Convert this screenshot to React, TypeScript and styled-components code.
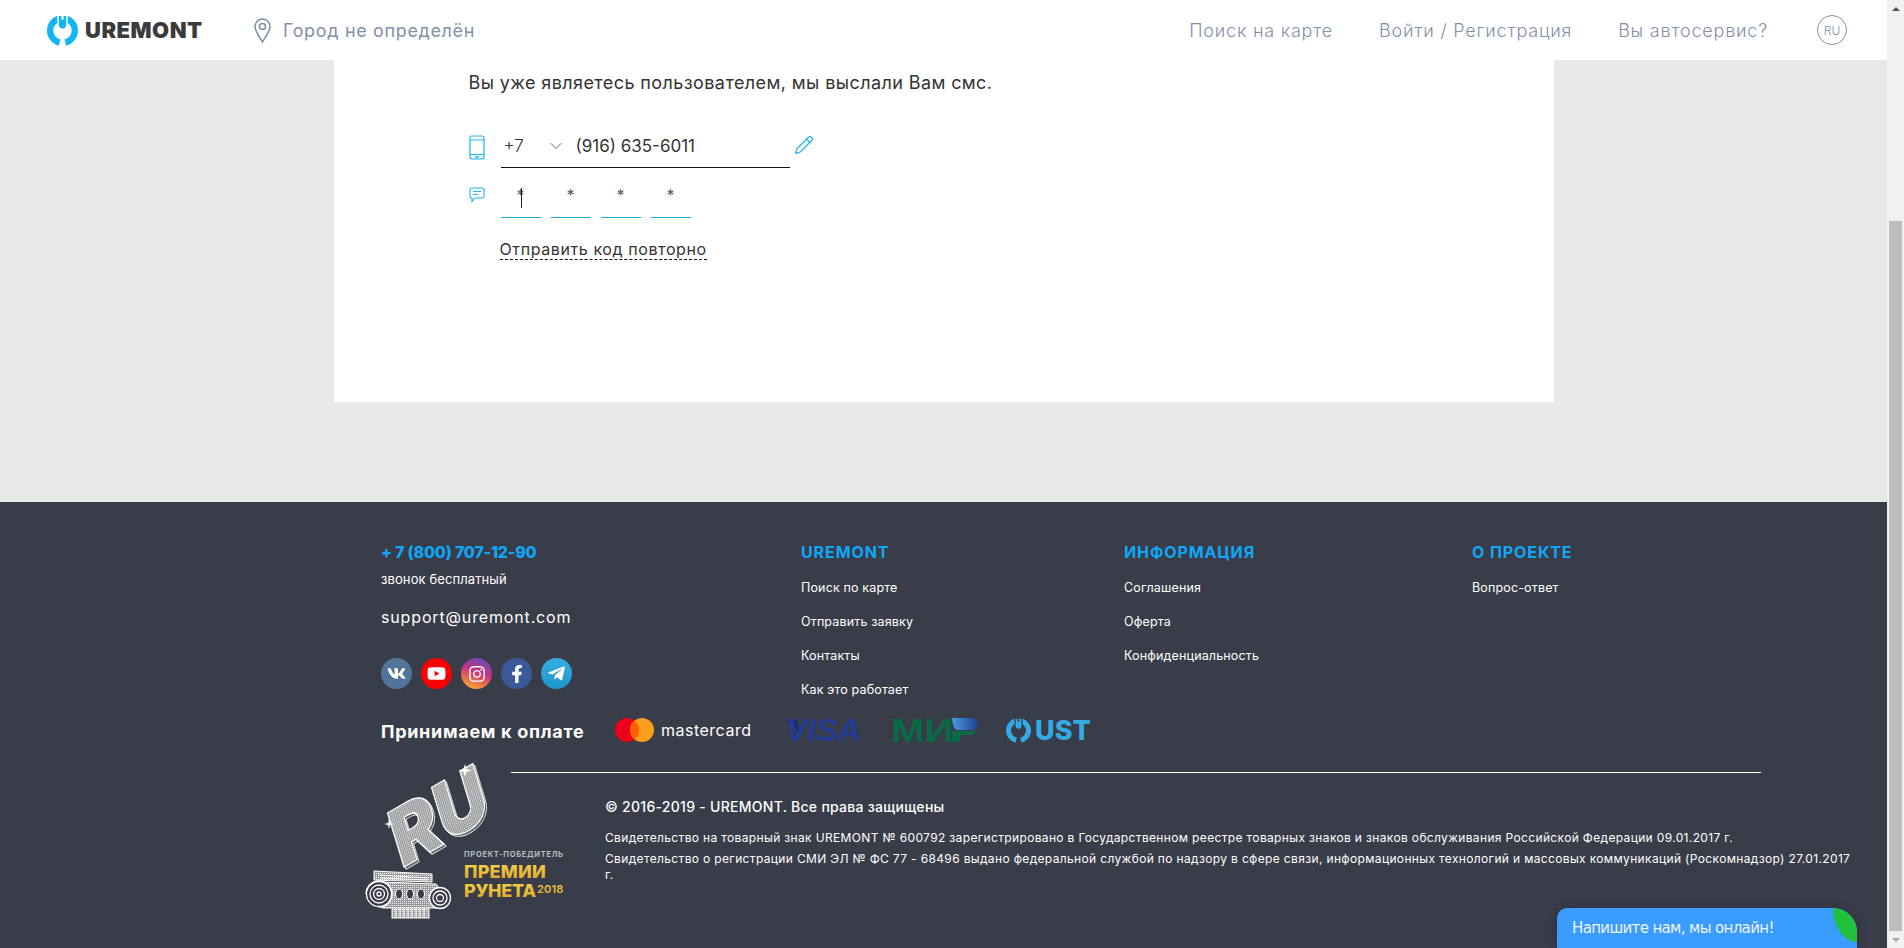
import React from "react";
import styled, { createGlobalStyle } from "styled-components";
import { FaVk, FaYoutube, FaInstagram, FaFacebookF, FaTelegramPlane } from "react-icons/fa";
import { ChevronDown, Pencil } from "lucide-react";

const Global = createGlobalStyle`
  html, body { margin: 0; padding: 0; height: 100%; overflow: hidden; }
  body { font-family: Inter, "Open Sans", sans-serif; color: #333; }
  * { box-sizing: border-box; }
`;

const Page = styled.div`
  display: flex;
  height: 948px;
  overflow: hidden;
  position: relative;
`;
const Content = styled.div`
  flex: 1;
  min-width: 0;
  display: flex;
  flex-direction: column;
`;

const ScrollTrack = styled.div`
  width: 17px;
  background: #f1f1f1;
  display: flex;
  flex-direction: column;
  align-items: center;
`;
const ScrollArrow = styled.div<{ $down?: boolean }>`
  height: 17px;
  flex: none;
  width: 100%;
  display: flex;
  align-items: center;
  justify-content: center;
  &::before {
    content: "";
    border-left: 4px solid transparent;
    border-right: 4px solid transparent;
    ${(p) => (p.$down ? "border-top: 4px solid #a3a3a3;" : "border-bottom: 4px solid #505050;")}
  }
`;
const ScrollSpace = styled.div`
  height: 204px;
  flex: none;
`;
const ScrollThumb = styled.div`
  width: 13px;
  flex: 1;
  background: #bdbdbd;
`;

const Header = styled.header`
  height: 60px;
  flex: none;
  background: #fff;
  display: flex;
  align-items: center;
  padding: 0 40px 0 47px;
`;
const Logo = styled.div`
  display: flex;
  align-items: center;
  gap: 7px;
  width: 207px;
`;
const LogoWord = styled.span`
  font-family: Inter, sans-serif;
  font-weight: 900;
  font-size: 22px;
  letter-spacing: 0.5px;
  color: #3b3b3b;
`;
const City = styled.div`
  display: flex;
  align-items: center;
  gap: 12px;
  font-size: 18px;
  letter-spacing: 0.65px;
  color: #8391a8;
`;
const Nav = styled.nav`
  margin-left: auto;
  display: flex;
  align-items: center;
  gap: 46px;
`;
const NavLink = styled.a`
  font-size: 18px;
  font-weight: 300;
  letter-spacing: 0.8px;
  color: #8391a8;
`;
const Lang = styled.div`
  width: 30px;
  height: 30px;
  margin-left: 3px;
  border: 1px solid #8391a8;
  border-radius: 50%;
  display: flex;
  align-items: center;
  justify-content: center;
  font-size: 12px;
  font-weight: 300;
  color: #8391a8;
`;

const Main = styled.main`
  height: 442px;
  flex: none;
  background: #e8e8e8;
`;
const Card = styled.section`
  width: 1220px;
  height: 342px;
  margin: 0 auto;
  background: #fff;
  padding: 12px 0 0 135px;
`;
const Lead = styled.p`
  margin: 0;
  font-size: 18px;
  line-height: 22px;
  letter-spacing: 0.41px;
  color: #333;
`;
const PhoneRow = styled.div`
  display: flex;
  margin-top: 41px;
  align-items: flex-start;
`;
const IconCell = styled.div`
  width: 32px;
  flex: none;
  display: flex;
`;
const PhoneField = styled.div`
  width: 289px;
  height: 33px;
  border-bottom: 1px solid #111;
  display: flex;
  align-items: center;
  padding: 0 0 10px 3px;
  font-size: 17px;
  color: #333;
`;
const Code = styled.span`
  width: 42px;
  font-weight: 300;
`;
const Number = styled.span`
  margin-left: 10px;
`;
const PencilBox = styled.div`
  margin-left: 4px;
  color: #1fb5f5;
  display: flex;
`;
const CodeRow = styled.div`
  display: flex;
  margin-top: 19px;
  align-items: flex-start;
`;
const Digits = styled.div`
  display: flex;
  gap: 10px;
  margin-top: -6px;
`;
const Digit = styled.div`
  width: 40px;
  height: 37px;
  border-bottom: 1px solid #1fa9e8;
  position: relative;
  text-align: center;
  font-size: 16px;
  line-height: 28px;
  color: #555;
`;
const Caret = styled.i`
  position: absolute;
  left: 20px;
  top: 7px;
  width: 1px;
  height: 20px;
  background: #222;
`;
const Resend = styled.a`
  display: inline-block;
  margin: 22px 0 0 31px;
  font-size: 16px;
  line-height: 19px;
  letter-spacing: 0.6px;
  color: #333;
  border-bottom: 1px dashed #111;
`;

const Footer = styled.footer`
  flex: 1;
  background: #393c49;
  color: #fff;
  overflow: hidden;
`;
const Columns = styled.div`
  display: grid;
  grid-template-columns: 420px 323px 348px 1fr;
  padding: 40px 0 0 381px;
  height: 215px;
`;
const Phone = styled.div`
  font-size: 16px;
  line-height: 20px;
  font-weight: 800;
  letter-spacing: -0.2px;
  color: #0fa8f8;
`;
const PhoneNote = styled.div`
  margin-top: 8px;
  font-size: 13px;
  line-height: 18px;
  letter-spacing: 0.1px;
`;
const Email = styled.div`
  margin-top: 19px;
  font-size: 16px;
  line-height: 20px;
  letter-spacing: 0.85px;
`;
const Socials = styled.div`
  display: flex;
  gap: 9px;
  margin-top: 31px;
`;
const Social = styled.a<{ $bg: string; $size: number }>`
  width: 31px;
  height: 31px;
  border-radius: 50%;
  background: ${(p) => p.$bg};
  color: #fff;
  display: flex;
  align-items: center;
  justify-content: center;
  font-size: ${(p) => p.$size}px;
`;
const ColTitle = styled.div`
  font-size: 16px;
  line-height: 20px;
  font-weight: 700;
  letter-spacing: 0.9px;
  color: #0fa8f8;
  margin-bottom: 9px;
`;
const ColLink = styled.a`
  display: block;
  font-size: 12.5px;
  line-height: 34px;
  letter-spacing: 0.15px;
  color: #fff;
`;
const PayRow = styled.div`
  display: flex;
  align-items: center;
  height: 26px;
  padding-left: 381px;
`;
const PayTitle = styled.div`
  width: 234px;
  padding-top: 3px;
  font-size: 18px;
  font-weight: 700;
  letter-spacing: 0.7px;
`;
const Brand = styled.div<{ $w: number }>`
  width: ${(p) => p.$w}px;
  display: flex;
  align-items: center;
  svg { overflow: visible; }
`;
const McWord = styled.span`
  margin-left: 7px;
  font-size: 16px;
  letter-spacing: 0.5px;
  color: #fff;
`;
const UstWord = styled.span`
  margin-left: 4px;
  font-size: 27px;
  font-weight: 800;
  color: #34aae4;
`;
const Divider = styled.div`
  width: 1250px;
  height: 1px;
  margin: 29px 0 0 511px;
  background: #fff;
`;
const Bottom = styled.div`
  display: flex;
  margin-top: -18px;
  padding-left: 350px;
`;
const AwardArt = styled.svg`
  flex: none;
  overflow: visible;
`;
const Legal = styled.div`
  margin-left: 25px;
  padding-top: 42px;
  width: 1250px;
  font-size: 12px;
  line-height: 16px;
  letter-spacing: 0.35px;
  color: #fff;
`;
const Copy = styled.div`
  font-size: 14px;
  line-height: 20px;
  font-weight: 500;
  letter-spacing: 0.28px;
  margin-bottom: 13px;
`;
const LegalLine = styled.p`
  margin: 0 0 5px;
`;

const Chat = styled.div`
  position: absolute;
  left: 1557px;
  top: 908px;
  width: 300px;
  height: 40px;
  background: #3a9cff;
  border-radius: 10px 24px 0 0;
  padding-left: 15px;
  font-family: "DejaVu Sans", sans-serif;
  font-size: 15px;
  line-height: 40px;
  letter-spacing: -0.65px;
  color: #eaf4ff;
  overflow: hidden;
  box-shadow: 0 0 12px rgba(0, 0, 0, 0.2);
`;
const ChatLeaf = styled.i`
  position: absolute;
  right: 0;
  top: 0;
  width: 24px;
  height: 34px;
  background: #1fc13e;
  border-radius: 0 0 0 24px / 0 0 0 34px;
`;

const WrenchMark = ({ size, color, gap }: { size: number; color: string; gap: string }) => (
  <svg width={size} height={size} viewBox="0 0 30 30">
    <circle cx="15" cy="15" r="12" fill="none" stroke={color} strokeWidth="6" />
    <rect x="10" y="0" width="10" height="7" fill={gap} />
    <path d="M11.500 1h7v8.500a3.500 3.500 0 0 1-7 0z" fill={color} />
    <rect x="14" y="1" width="2" height="3.500" fill={gap} />
    <path d="M13 23.500L11.500 30h7L17 23.500z" fill={gap} />
  </svg>
);

const PinIcon = () => (
  <svg width="17" height="25" viewBox="0 0 17 25" fill="none" stroke="#7b8ba3" strokeWidth="1.500">
    <path d="M8.500 24C5 18 1 13 1 8.500a7.500 7.500 0 0 1 15 0C16 13 12 18 8.500 24z" />
    <circle cx="8.500" cy="8.500" r="3" />
  </svg>
);
const PhoneIcon = () => (
  <svg width="16" height="25" viewBox="0 0 16 25" fill="none" stroke="#1fb5f5" strokeWidth="1.200">
    <rect x="1" y="1" width="14" height="23" rx="2" />
    <path d="M1 5h14M1 19.500h14" />
    <path d="M6 22h4" strokeWidth="1.600" />
  </svg>
);
const CommentIcon = () => (
  <svg width="16" height="16" viewBox="0 0 16 16" fill="none" stroke="#1fb5f5" strokeWidth="1.100">
    <path d="M2.500 1h11A1.500 1.500 0 0 1 15 2.500v7a1.500 1.500 0 0 1-1.500 1.500H6l-3 3.500V11h-.5A1.500 1.500 0 0 1 1 9.500v-7A1.500 1.500 0 0 1 2.500 1z" />
    <path d="M4 4.500h8M4 7.500h5" />
  </svg>
);

const Award = () => (
  <AwardArt width="230" height="170" viewBox="0 0 230 170">
    <defs>
      <pattern id="dots" width="2" height="2" patternUnits="userSpaceOnUse">
        <rect width="2" height="2" fill="#9a9a9e" />
        <rect width="1" height="1" fill="#f0f0f0" />
      </pattern>
      <linearGradient id="gold" x1="0" y1="0" x2="0" y2="1">
        <stop offset="0" stopColor="#f7d64a" />
        <stop offset="1" stopColor="#d9a526" />
      </linearGradient>
    </defs>
    <text
      transform="translate(53 116) rotate(-30) skewX(-13)"
      fontFamily="Inter"
      fontWeight="900"
      fontSize="76"
      fill="#55575f"
      stroke="#d8d8d8"
      strokeWidth="1"
    >
      RU
    </text>
    <text
      transform="translate(51 114) rotate(-30) skewX(-13)"
      fontFamily="Inter"
      fontWeight="900"
      fontSize="76"
      fill="url(#dots)"
      stroke="#fff"
      strokeWidth="1.200"
    >
      RU
    </text>
    <path d="M115 9l1.500 5 5 1.500-5 1.500-1.500 5-1.500-5-5-1.500 5-1.500z" fill="#fff" />
    <path d="M39 64l1 4 4 1-4 1-1 4-1-4-4-1 4-1z" fill="#fff" />
    <g fill="url(#dots)" stroke="#fff" strokeWidth="1">
      <path d="M24 116l58 3v8l-58-2z" />
      <path d="M32 127l54 2 8 10v14H32z" />
      <rect x="42" y="154" width="37" height="9" />
    </g>
    <g fill="#393c49" stroke="#fff" strokeWidth="1.300">
      <path d="M16 139a13 13 0 1 1 13 13" />
      <circle cx="29" cy="139" r="12.500" />
      <circle cx="29" cy="139" r="9" />
      <circle cx="29" cy="139" r="5.500" />
      <circle cx="29" cy="139" r="2" />
      <circle cx="90" cy="143" r="10.500" />
      <circle cx="90" cy="143" r="7" />
      <circle cx="90" cy="143" r="3.500" />
    </g>
    <g stroke="#fff" strokeWidth="1" fill="#393c49">
      <path d="M46 154v9M50 154v9M54 154v9M58 154v9M62 154v9M66 154v9M70 154v9M74 154v9" />
      <ellipse cx="49" cy="139" rx="3.500" ry="5" />
      <ellipse cx="60" cy="139" rx="3.500" ry="5" />
      <ellipse cx="71" cy="139" rx="3.500" ry="5" />
      <path d="M28 120l50 3M30 123l48 2" />
    </g>
    <text x="114" y="102" fontFamily="Inter" fontWeight="700" fontSize="7.500" letterSpacing="0.72" fill="#b9bcc4">
      ПРОЕКТ-ПОБЕДИТЕЛЬ
    </text>
    <text x="114" y="123" fontFamily="Inter" fontWeight="800" fontSize="18" letterSpacing="0.2" fill="url(#gold)">
      ПРЕМИИ
    </text>
    <text x="114" y="142" fontFamily="Inter" fontWeight="800" fontSize="18" letterSpacing="-0.3" fill="url(#gold)">
      РУНЕТА
    </text>
    <text x="187" y="138" fontFamily="Inter" fontWeight="600" fontSize="11" letterSpacing="0.2" fill="url(#gold)">
      2018
    </text>
  </AwardArt>
);

const App = () => {
  return (
    <Page>
      <Global />
      <Content>
        <Header>
          <Logo>
            <WrenchMark size={31} color="#10b5f2" gap="#fff" />
            <LogoWord>UREMONT</LogoWord>
          </Logo>
          <City>
            <PinIcon />
            Город не определён
          </City>
          <Nav>
            <NavLink>Поиск на карте</NavLink>
            <NavLink>Войти / Регистрация</NavLink>
            <NavLink>Вы автосервис?</NavLink>
            <Lang>RU</Lang>
          </Nav>
        </Header>
        <Main>
          <Card>
            <Lead>Вы уже являетесь пользователем, мы выслали Вам смс.</Lead>
            <PhoneRow>
              <IconCell><PhoneIcon /></IconCell>
              <PhoneField>
                <Code>+7</Code>
                <ChevronDown size={20} strokeWidth={1} color="#444" />
                <Number>(916) 635-6011</Number>
              </PhoneField>
              <PencilBox><Pencil size={20} strokeWidth={1.5} /></PencilBox>
            </PhoneRow>
            <CodeRow>
              <IconCell><CommentIcon /></IconCell>
              <Digits>
                <Digit>*<Caret /></Digit>
                <Digit>*</Digit>
                <Digit>*</Digit>
                <Digit>*</Digit>
              </Digits>
            </CodeRow>
            <Resend>Отправить код повторно</Resend>
          </Card>
        </Main>
        <Footer>
          <Columns>
            <div>
              <Phone>+ 7 (800) 707-12-90</Phone>
              <PhoneNote>звонок бесплатный</PhoneNote>
              <Email>support@uremont.com</Email>
              <Socials>
                <Social $bg="#527499" $size={19}><FaVk /></Social>
                <Social $bg="#ff0000" $size={19}><FaYoutube /></Social>
                <Social $bg="linear-gradient(200deg, #5b4fc0 5%, #c9327f 45%, #f08a3c 80%, #fcc25e)" $size={18}><FaInstagram /></Social>
                <Social $bg="#3b5998" $size={18}><FaFacebookF /></Social>
                <Social $bg="linear-gradient(180deg, #37aee2, #1e96c8)" $size={19}><FaTelegramPlane /></Social>
              </Socials>
            </div>
            <div>
              <ColTitle>UREMONT</ColTitle>
              <ColLink>Поиск по карте</ColLink>
              <ColLink>Отправить заявку</ColLink>
              <ColLink>Контакты</ColLink>
              <ColLink>Как это работает</ColLink>
            </div>
            <div>
              <ColTitle>ИНФОРМАЦИЯ</ColTitle>
              <ColLink>Соглашения</ColLink>
              <ColLink>Оферта</ColLink>
              <ColLink>Конфиденциальность</ColLink>
            </div>
            <div>
              <ColTitle>О ПРОЕКТЕ</ColTitle>
              <ColLink>Вопрос-ответ</ColLink>
            </div>
          </Columns>
          <PayRow>
            <PayTitle>Принимаем к оплате</PayTitle>
            <Brand $w={168}>
              <svg width="39" height="24" viewBox="0 0 39 24">
                <circle cx="12" cy="12" r="12" fill="#eb001b" />
                <circle cx="27" cy="12" r="12" fill="#f79e1b" />
                <path d="M19.500 2.600a12 12 0 0 1 0 18.800a12 12 0 0 1 0-18.800z" fill="#ff5f00" />
              </svg>
              <McWord>mastercard</McWord>
            </Brand>
            <Brand $w={108}>
              <svg width="78" height="26" viewBox="0 0 78 26">
                <path d="M2 2h12l3 14z" fill="#1a2b78" />
                <text x="3" y="24" fontFamily="Liberation Sans" fontWeight="700" fontStyle="italic" fontSize="32" fill="#233b95">VISA</text>
              </svg>
            </Brand>
            <Brand $w={115}>
              <svg width="87" height="26" viewBox="0 0 87 26">
                <defs>
                  <linearGradient id="mirBlue" x1="0" y1="0" x2="1" y2="0">
                    <stop offset="0" stopColor="#4a9be0" />
                    <stop offset="1" stopColor="#1d3f8f" />
                  </linearGradient>
                </defs>
                <text transform="translate(0 24.500) scale(1.22 1)" fontFamily="Liberation Sans" fontWeight="700" fontSize="33" fill="#0a6a45">МИ</text>
                <path d="M61 1h20q6 0 6 6v1q-1 5-6 5H66q-4 0-5-12z" fill="url(#mirBlue)" />
                <path d="M61 14h20q3 0 5-2-1 5-6 6h-11v7h-8z" fill="#0a6a45" />
              </svg>
            </Brand>
            <Brand $w={90}>
              <WrenchMark size={25} color="#34aae4" gap="#393c49" />
              <UstWord>UST</UstWord>
            </Brand>
          </PayRow>
          <Divider />
          <Bottom>
            <Award />
            <Legal>
              <Copy>© 2016-2019 - UREMONT. Все права защищены</Copy>
              <LegalLine>Свидетельство на товарный знак UREMONT № 600792 зарегистрировано в Государственном реестре товарных знаков и знаков обслуживания Российской Федерации 09.01.2017 г.</LegalLine>
              <LegalLine>Свидетельство о регистрации СМИ ЭЛ № ФС 77 - 68496 выдано федеральной службой по надзору в сфере связи, информационных технологий и массовых коммуникаций (Роскомнадзор) 27.01.2017 г.</LegalLine>
            </Legal>
          </Bottom>
        </Footer>
      </Content>
      <ScrollTrack>
        <ScrollArrow />
        <ScrollSpace />
        <ScrollThumb />
        <ScrollArrow $down />
      </ScrollTrack>
      <Chat>
        Напишите нам, мы онлайн!
        <ChatLeaf />
      </Chat>
    </Page>
  );
};

export default App;
